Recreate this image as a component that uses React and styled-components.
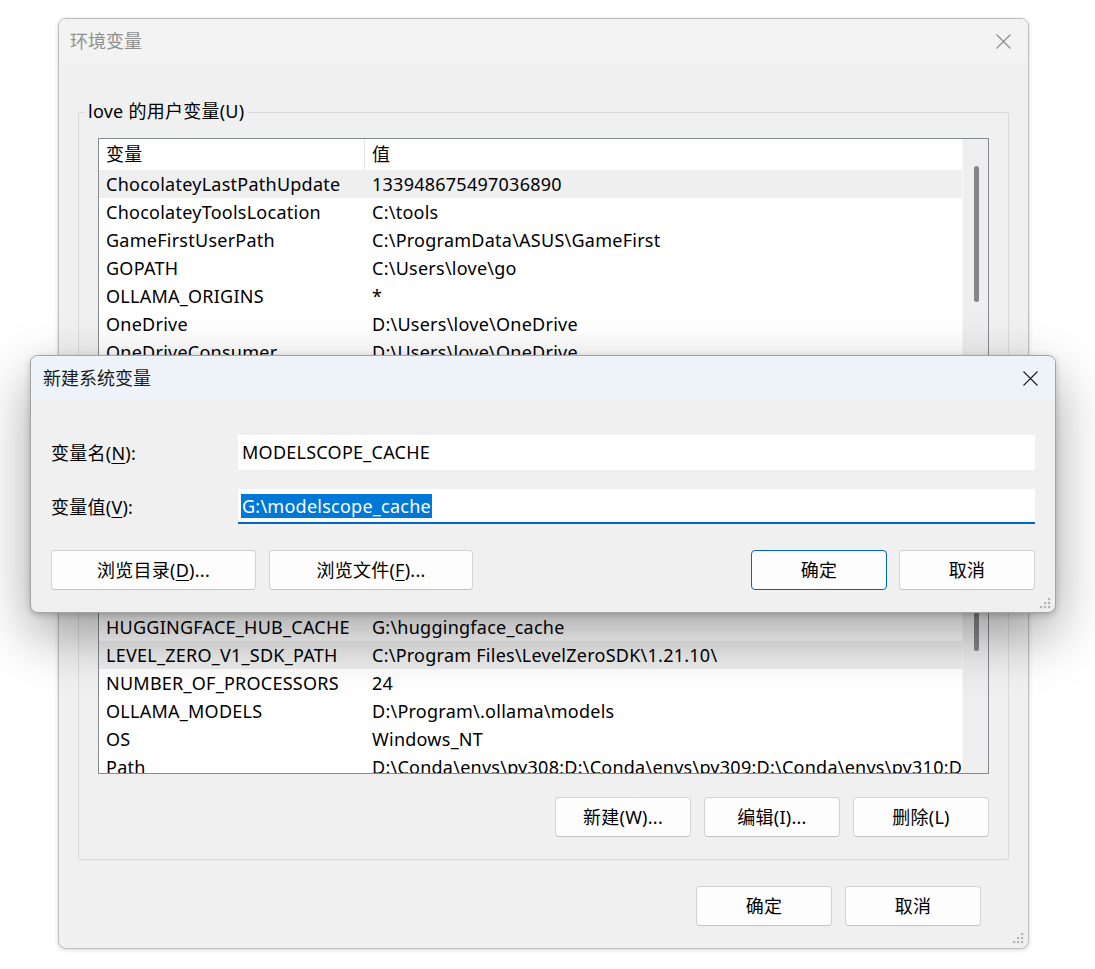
import React from 'react'
import styled, { createGlobalStyle } from 'styled-components'

const FONT = `"Noto Sans", "Noto Sans CJK SC", sans-serif`

const GlobalStyle = createGlobalStyle`
  html, body {
    margin: 0;
    padding: 0;
    background: #fff;
  }
  body {
    font-family: ${FONT};
    font-size: 18px;
    letter-spacing: 0.25px;
    color: #000;
  }
  * {
    box-sizing: border-box;
  }
`

const Desktop = styled.div`
  position: relative;
  width: 1095px;
  height: 969px;
  overflow: hidden;
  background: #fff;
`

// top-level windows sit on the desktop at their own place
const Window = styled.div`
  position: absolute;
  z-index: ${(p) => (p.$active ? 2 : 1)};
  left: ${(p) => p.$x}px;
  top: ${(p) => p.$y}px;
  width: ${(p) => p.$w}px;
  height: ${(p) => p.$h}px;
  display: flex;
  flex-direction: column;
  background: #f0f0f0;
  border: 1px solid ${(p) => (p.$active ? '#a4a4a4' : '#bdbdbd')};
  border-radius: 8px;
  overflow: hidden;
  box-shadow: ${(p) =>
    p.$active
      ? '0 22px 56px rgba(0,0,0,0.36), 0 2px 6px rgba(0,0,0,0.2)'
      : '0 1px 4px rgba(0,0,0,0.16)'};
`

const TitleBar = styled.div`
  flex: none;
  height: 44px;
  display: flex;
  align-items: center;
  justify-content: space-between;
  background: ${(p) => (p.$active ? '#eef3f9' : '#f3f3f3')};
  padding-left: ${(p) => (p.$active ? 12 : 11)}px;
`

const TitleText = styled.span`
  color: ${(p) => (p.$active ? '#1a1a1a' : '#8f8f8f')};
  line-height: 24px;
  letter-spacing: 0;
`

const CloseBox = styled.div`
  width: 50px;
  height: 44px;
  display: flex;
  align-items: center;
  justify-content: center;
  color: ${(p) => (p.$active ? '#1a1a1a' : '#8a8a8a')};
`

const Grip = styled.svg`
  position: absolute;
  right: ${(p) => p.$r}px;
  bottom: ${(p) => p.$b}px;
`

const OuterBody = styled.div`
  flex: 1;
  display: flex;
  flex-direction: column;
  padding: 49px 19px 0;
`

const GroupBox = styled.div`
  border: 1px solid #dadada;
  border-radius: 2px;
  padding: 0 19px 22px;
  margin-top: ${(p) => p.$gap || 0}px;
`

const GroupLabel = styled.div`
  width: fit-content;
  margin: -14px 0 0 -14px;
  padding: 0 4px;
  line-height: 24px;
  background: #f0f0f0;
  color: #000;
`

const ListView = styled.div`
  margin-top: 15px;
  height: 250px;
  border: 1px solid #858a92;
  background: #fff;
  display: grid;
  grid-template-columns: 1fr 26px;
  overflow: hidden;
`

const Table = styled.div`
  overflow: hidden;
  display: flex;
  flex-direction: column;
`

const HeaderRow = styled.div`
  flex: none;
  height: 31px;
  display: grid;
  grid-template-columns: 266px 1fr;
  background: #fff;
`

const HeaderCell = styled.div`
  padding-left: 7px;
  line-height: 31px;
  border-right: ${(p) => (p.$divider ? '1px solid #e5e5e5' : 'none')};
`

const Rows = styled.div`
  padding-top: ${(p) => p.$offset || 0}px;
`

const Row = styled.div`
  height: 28px;
  display: grid;
  grid-template-columns: 266px 1fr;
  background: ${(p) => (p.$hl ? '#efefef' : 'transparent')};
`

const Cell = styled.div`
  padding-left: 7px;
  line-height: 28px;
  white-space: nowrap;
  overflow: hidden;
`

const Track = styled.div`
  background: #eeeeee;
  border-left: 1px solid #f7f7f7;
  display: flex;
  flex-direction: column;
  align-items: center;
`

const Thumb = styled.div`
  margin-top: ${(p) => p.$top}px;
  height: ${(p) => p.$len}px;
  width: 5px;
  margin-left: 1px;
  border-radius: 3px;
  background: #858585;
`

const ButtonRow = styled.div`
  display: flex;
  justify-content: flex-end;
  gap: 13px;
  margin-top: ${(p) => p.$gap}px;
  padding-right: ${(p) => p.$right || 0}px;
`

const Button = styled.button`
  width: ${(p) => p.$w || 136}px;
  height: 40px;
  padding: 0;
  font-family: ${FONT};
  font-size: 18px;
  letter-spacing: 0.25px;
  color: #000;
  background: #fdfdfd;
  border: 1px solid ${(p) => (p.$primary ? '#0067c0' : '#d3d3d3')};
  border-bottom-color: ${(p) => (p.$primary ? '#0067c0' : '#c2c2c2')};
  border-radius: 4px;
  line-height: 24px;
`

const Key = styled.u`
  text-decoration-thickness: 1px;
  text-underline-offset: 3px;
`

const DialogBody = styled.div`
  flex: 1;
  padding: 35px 20px 0 20px;
  display: flex;
  flex-direction: column;
`

const Form = styled.div`
  display: grid;
  grid-template-columns: 187px 1fr;
  row-gap: 19px;
  align-items: center;
`

const FieldLabel = styled.label`
  line-height: 24px;
`

const Field = styled.div`
  height: 35px;
  background: #fff;
  border-bottom: 2px solid ${(p) => (p.$focus ? '#0067c0' : '#ffffff')};
  padding: 0 4px;
  display: flex;
  align-items: center;
  white-space: nowrap;
  line-height: 24px;
`

const Selection = styled.span`
  background: #0078d7;
  color: #fff;
  padding: 0 1px;
  margin-left: -1px;
`

const DialogButtons = styled.div`
  margin-top: 26px;
  display: flex;
  justify-content: space-between;
`

const ButtonGroup = styled.div`
  display: flex;
  gap: ${(p) => p.$gap}px;
`

const CloseIcon = () => (
  <svg width="15" height="15" viewBox="0 0 15 15">
    <path d="M0.5 0.5 L14.5 14.5 M14.5 0.5 L0.5 14.5" stroke="currentColor" strokeWidth="1.1" fill="none" />
  </svg>
)

const GripDots = ({ r, b }) => (
  <Grip $r={r} $b={b} width="11" height="11" viewBox="0 0 11 11">
    {[
      [8, 0],
      [4, 4],
      [8, 4],
      [0, 8],
      [4, 8],
      [8, 8],
    ].map(([x, y]) => (
      <rect key={`${x}-${y}`} x={x} y={y} width="2.2" height="2.2" fill="#b4b4b4" />
    ))}
  </Grip>
)

const userVars = [
  ['ChocolateyLastPathUpdate', '133948675497036890', true],
  ['ChocolateyToolsLocation', 'C:\\tools'],
  ['GameFirstUserPath', 'C:\\ProgramData\\ASUS\\GameFirst'],
  ['GOPATH', 'C:\\Users\\love\\go'],
  ['OLLAMA_ORIGINS', '*'],
  ['OneDrive', 'D:\\Users\\love\\OneDrive'],
  ['OneDriveConsumer', 'D:\\Users\\love\\OneDrive'],
  ['Path', 'C:\\Users\\love\\AppData\\Local\\Microsoft\\WindowsApps;'],
]

const systemVars = [
  ['ComSpec', 'C:\\WINDOWS\\system32\\cmd.exe'],
  ['DriverData', 'C:\\Windows\\System32\\Drivers\\DriverData'],
  ['HUGGINGFACE_HUB_CACHE', 'G:\\huggingface_cache'],
  ['LEVEL_ZERO_V1_SDK_PATH', 'C:\\Program Files\\LevelZeroSDK\\1.21.10\\', true],
  ['NUMBER_OF_PROCESSORS', '24'],
  ['OLLAMA_MODELS', 'D:\\Program\\.ollama\\models'],
  ['OS', 'Windows_NT'],
  ['Path', 'D:\\Conda\\envs\\py308;D:\\Conda\\envs\\py309;D:\\Conda\\envs\\py310;D:\\Conda\\envs\\py311'],
]

const VarList = ({ items, offset, thumbTop, thumbLen }) => (
  <ListView>
    <Table>
      <HeaderRow>
        <HeaderCell $divider>变量</HeaderCell>
        <HeaderCell>值</HeaderCell>
      </HeaderRow>
      <Rows $offset={offset}>
        {items.map(([name, value, hl]) => (
          <Row key={name} $hl={hl}>
            <Cell>{name}</Cell>
            <Cell>{value}</Cell>
          </Row>
        ))}
      </Rows>
    </Table>
    <Track>
      <Thumb $top={thumbTop} $len={thumbLen} />
    </Track>
  </ListView>
)

export default function App() {
  return (
    <Desktop>
      <GlobalStyle />

      <Window $x={58} $y={18} $w={971} $h={931}>
        <TitleBar>
          <TitleText>环境变量</TitleText>
          <CloseBox>
            <CloseIcon />
          </CloseBox>
        </TitleBar>
        <OuterBody>
          <GroupBox>
            <GroupLabel>love 的用户变量(U)</GroupLabel>
            <VarList items={userVars} offset={0} thumbTop={27} thumbLen={136} />
            <ButtonRow $gap={23}>
              <Button>新建(N)...</Button>
              <Button>编辑(E)...</Button>
              <Button>删除(D)</Button>
            </ButtonRow>
          </GroupBox>

          <GroupBox $gap={24}>
            <GroupLabel>系统变量(S)</GroupLabel>
            <VarList items={systemVars} offset={1} thumbTop={70} thumbLen={56} />
            <ButtonRow $gap={23}>
              <Button>新建(W)...</Button>
              <Button>编辑(I)...</Button>
              <Button>删除(L)</Button>
            </ButtonRow>
          </GroupBox>

          <ButtonRow $gap={26} $right={28}>
            <Button>确定</Button>
            <Button>取消</Button>
          </ButtonRow>
        </OuterBody>
        <GripDots r={4} b={4} />
      </Window>

      <Window $active $x={30} $y={355} $w={1026} $h={258}>
        <TitleBar $active>
          <TitleText $active>新建系统变量</TitleText>
          <CloseBox $active>
            <CloseIcon />
          </CloseBox>
        </TitleBar>
        <DialogBody>
          <Form>
            <FieldLabel>
              变量名(<Key>N</Key>):
            </FieldLabel>
            <Field>MODELSCOPE_CACHE</Field>
            <FieldLabel>
              变量值(<Key>V</Key>):
            </FieldLabel>
            <Field $focus>
              <Selection>G:\modelscope_cache</Selection>
            </Field>
          </Form>
          <DialogButtons>
            <ButtonGroup $gap={13}>
              <Button $w={205}>
                浏览目录(<Key>D</Key>)...
              </Button>
              <Button $w={204}>
                浏览文件(<Key>F</Key>)...
              </Button>
            </ButtonGroup>
            <ButtonGroup $gap={12}>
              <Button $primary>确定</Button>
              <Button>取消</Button>
            </ButtonGroup>
          </DialogButtons>
        </DialogBody>
        <GripDots r={4} b={3} />
      </Window>
    </Desktop>
  )
}
